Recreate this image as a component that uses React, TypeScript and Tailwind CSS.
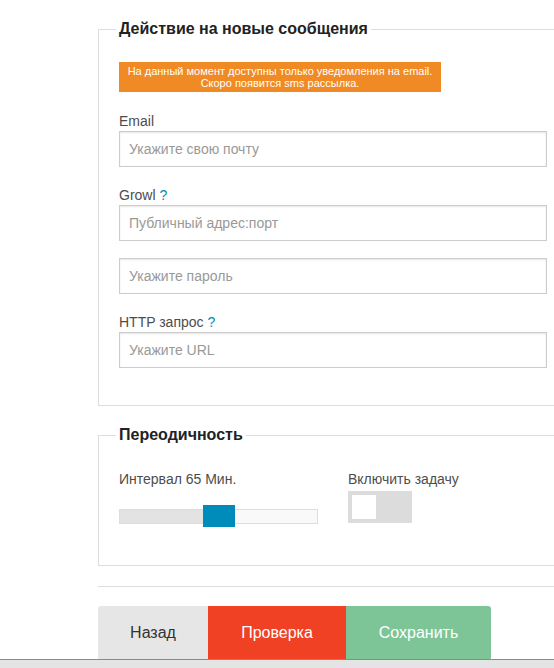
import React from "react";

const font = { fontFamily: '"Liberation Sans", Arial, sans-serif' };

function Field({ placeholder }: { placeholder: string }) {
  return (
    <input
      type="text"
      placeholder={placeholder}
      className="block w-[428px] h-[36px] border border-[#cccccc] bg-white px-[9px] text-[14px] text-[#333] placeholder:text-[#999] shadow-[inset_0_1px_2px_rgba(0,0,0,0.1)] outline-none"
    />
  );
}

function Label({ children, q }: { children: React.ReactNode; q?: boolean }) {
  return (
    <div className="h-[20px] leading-[20px] text-[14px] text-[#4d4d4d]">
      {children}
      {q && <span className="text-[#008cba]"> ?</span>}
    </div>
  );
}

export default function App() {
  return (
    <div className="relative w-full h-[668px] overflow-hidden bg-white" style={font}>
      <div className="pl-[98px]">
        <div className="w-[471px]">
          <fieldset className="mt-[19px] border border-[#dddddd] px-[20px] pb-[36px] h-[387px]">
            <legend className="-ml-[3px] px-[3px] h-[20px] leading-[20px] text-[16px] font-bold text-[#222]">
              Действие на новые сообщения
            </legend>
            <div className="mt-[23px] w-[322px] bg-[#f08a24] py-[3px] text-center text-[11px] leading-[12px] text-white">
              На данный момент доступны только уведомления на email.
              <br />
              Скоро появится sms рассылка.
            </div>
            <div className="mt-[19px]">
              <Label>Email</Label>
              <Field placeholder="Укажите свою почту" />
            </div>
            <div className="mt-[18px]">
              <Label q>Growl</Label>
              <Field placeholder="Публичный адрес:порт" />
            </div>
            <div className="mt-[17px]">
              <Field placeholder="Укажите пароль" />
            </div>
            <div className="mt-[18px]">
              <Label q>HTTP запрос</Label>
              <Field placeholder="Укажите URL" />
            </div>
          </fieldset>

          <fieldset className="mt-[19px] border border-[#dddddd] px-[20px] h-[141px]">
            <legend className="-ml-[3px] px-[3px] h-[20px] leading-[20px] text-[16px] font-bold text-[#222]">
              Переодичность
            </legend>
            <div className="mt-[24px] flex">
              <div className="w-[199px]">
                <Label>Интервал 65 Мин.</Label>
                <div className="relative mt-[20px] h-[15px] w-[199px] border border-[#dddddd] bg-[#f9f9f9]">
                  <div className="h-full w-[84px] bg-[#e3e3e3]" />
                  <div className="absolute left-[83px] top-[-5px] h-[22px] w-[32px] bg-[#008cba]" />
                </div>
              </div>
              <div className="ml-[30px]">
                <Label>Включить задачу</Label>
                <div className="mt-[2px] h-[32px] w-[64px] bg-[#dcdcdc] p-[4px]">
                  <div className="h-[24px] w-[24px] bg-white" />
                </div>
              </div>
            </div>
          </fieldset>

          <div className="mt-[20px] h-px w-[471px] bg-[#dddddd]" />

          <div className="mt-[19px] flex h-[54px] text-[16px]">
            <button className="w-[110px] rounded-tl-[3px] bg-[#e6e6e6] text-[#333]">Назад</button>
            <button className="w-[138px] bg-[#f04124] text-white">Проверка</button>
            <button className="w-[145px] rounded-r-[3px] bg-[#7dc597] text-white">Сохранить</button>
          </div>
        </div>
      </div>
      <div className="absolute bottom-0 left-0 right-0 h-[9px] border-t border-[#8a8a8a] bg-[#e4e4e4]" />
    </div>
  );
}
